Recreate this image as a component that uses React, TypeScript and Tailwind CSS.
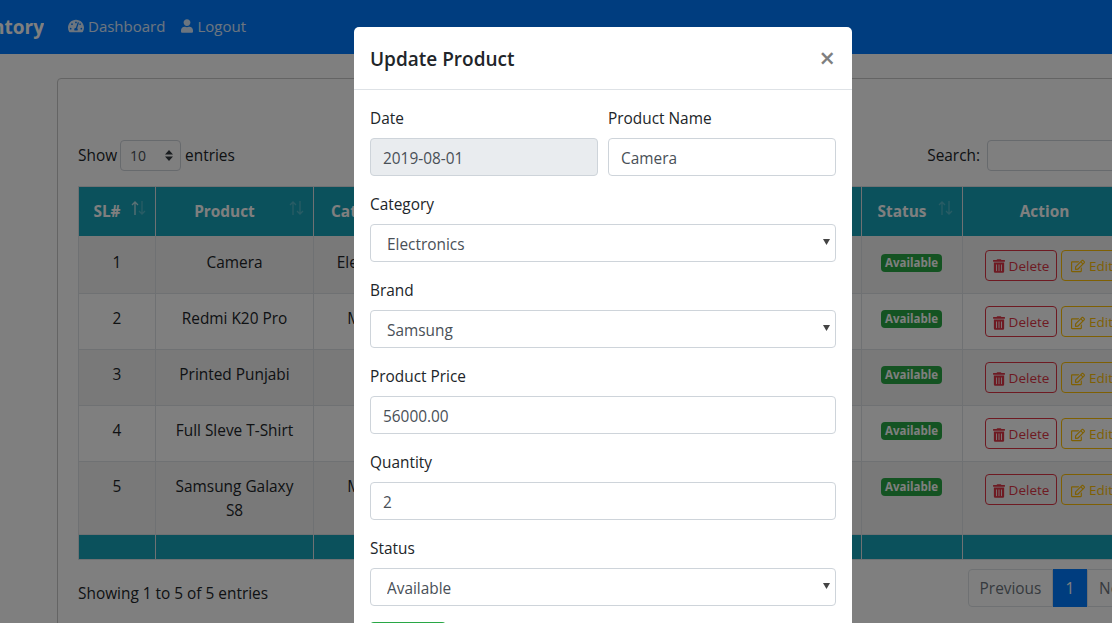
import React from "react";
import { FaTachometerAlt, FaUser, FaTrashAlt, FaRegEdit } from "react-icons/fa";

const font = "font-['Open_Sans','Noto_Sans',sans-serif]";

const rows = [
  { id: 1, name: ["Camera"], category: "Electronics", h: "h-[58px]", pt: "pt-[14px]", textPt: "pt-[15px]" },
  { id: 2, name: ["Redmi K20 Pro"], category: "Mobiles", h: "h-[56px]", pt: "pt-3", textPt: "pt-[13px]" },
  { id: 3, name: ["Printed Punjabi"], category: "Men", h: "h-[56px]", pt: "pt-3", textPt: "pt-[13px]" },
  { id: 4, name: ["Full Sleve T-Shirt"], category: "Men", h: "h-[56px]", pt: "pt-3", textPt: "pt-[13px]" },
  { id: 5, name: ["Samsung Galaxy", "S8"], category: "Mobiles", h: "h-[73px]", pt: "pt-3", textPt: "pt-[13px]" },
];

const SortHeader = ({ label, active }: { label: string; active?: boolean }) => (
  <th className="relative border-r border-[#dee2e6] pr-5 text-center font-bold text-white">
    {label}
    <svg className="absolute right-[9px] top-[14px] h-[14px] w-[15px]" viewBox="0 0 15 14" fill="none" stroke="white" strokeWidth="1.3">
      <path d="M4 14V1M1 4l3-3 3 3" opacity={active ? 0.7 : 0.25} />
      <path d="M11 0v13M8 10l3 3 3-3" opacity="0.25" />
    </svg>
  </th>
);

const Field = ({ label, value, disabled }: { label: string; value: string; disabled?: boolean }) => (
  <div className="mb-4 flex-1">
    <label className="mb-2 block h-6 leading-[26px] text-[#212529]">{label}</label>
    <input
      readOnly
      value={value}
      className={`block h-[38px] w-full rounded border border-[#ced4da] px-3 pt-[2px] text-[#495057] outline-none ${disabled ? "bg-[#e9ecef]" : "bg-white"}`}
    />
  </div>
);

const SelectField = ({ label, value }: { label: string; value: string }) => (
  <div className="mb-4">
    <label className="mb-2 block h-6 leading-[26px] text-[#212529]">{label}</label>
    <div className="relative">
      <select
        value={value}
        onChange={() => undefined}
        className="block h-[38px] w-full appearance-none rounded border border-[#ced4da] bg-white pl-4 pr-6 pt-[4px] text-[#495057] outline-none"
      >
        <option>{value}</option>
      </select>
      <svg className="pointer-events-none absolute right-[6px] top-[15px] h-[6px] w-[7px] text-[#444]" viewBox="0 0 7 6">
        <path d="M0 0h7L3.5 6z" fill="currentColor" />
      </svg>
    </div>
  </div>
);

export default function App() {
  return (
    <div className={`relative h-[623px] w-[1112px] overflow-hidden bg-white text-[15.4px] text-[#212529] ${font}`}>
      {/* Navbar */}
      <nav className="flex h-[54px] items-center bg-[#007bff]">
        <div className="flex w-[44px] justify-end overflow-hidden">
          <span className="whitespace-nowrap text-[19px] font-bold text-white">Inventory</span>
        </div>
        <div className="-mt-[2px] ml-6 flex items-center gap-4 text-[15px] text-white/85">
          <a className="flex items-center gap-[4px]">
            <FaTachometerAlt className="h-4 w-4" />
            Dashboard
          </a>
          <a className="flex items-center gap-[4px]">
            <FaUser className="h-[14px] w-[12px]" />
            Logout
          </a>
        </div>
      </nav>

      {/* Card */}
      <div className="ml-[57px] mt-6 h-[600px] w-[1090px] rounded border border-[#c8c8c8] bg-white px-5 pt-[61px]">
        <div className="flex h-[46px] items-start justify-between">
          <div className="flex items-center gap-[3px] whitespace-nowrap">
            Show
            <div className="relative">
              <select
                value="10"
                onChange={() => undefined}
                className="block h-[31px] w-[61px] appearance-none rounded border border-[#ced4da] bg-white pl-[9px] text-sm text-[#495057] outline-none"
              >
                <option>10</option>
              </select>
              <svg className="pointer-events-none absolute right-[8px] top-[10px] h-[11px] w-[8px] text-[#343a40]" viewBox="0 0 8 11">
                <path d="M4 0l4 4.4H0zM4 11L0 6.6h8z" fill="currentColor" />
              </svg>
            </div>
            <span className="ml-[1px]">entries</span>
          </div>
          <div className="flex items-center gap-[7px]">
            Search:
            <input readOnly className="h-[31px] w-[139px] rounded border border-[#ced4da] bg-white outline-none" />
          </div>
        </div>

        <table className="w-[1048px] table-fixed border-collapse border border-[#dee2e6]">
          <colgroup>
            <col className="w-[77px]" />
            <col className="w-[158px]" />
            <col className="w-[124px]" />
            <col className="w-[424px]" />
            <col className="w-[101px]" />
            <col className="w-[164px]" />
          </colgroup>
          <thead>
            <tr className="h-[49px] bg-[#17a2b8]">
              <SortHeader label="SL#" active />
              <SortHeader label="Product" />
              <SortHeader label="Category" />
              <th className="border-r border-[#dee2e6]" />
              <SortHeader label="Status" />
              <th className="text-center font-bold text-white">Action</th>
            </tr>
          </thead>
          <tbody>
            {rows.map((r) => (
              <tr key={r.id} className={`${r.h} border-b border-[#dee2e6] ${r.id % 2 === 1 ? "bg-[#f2f2f2]" : "bg-white"}`}>
                <td className={`border-r border-[#dee2e6] px-3 pb-0 text-center align-top leading-6 ${r.textPt}`}>{r.id}</td>
                <td className={`border-r border-[#dee2e6] px-3 pb-0 text-center align-top leading-6 ${r.textPt}`}>
                  {r.name.map((line) => (
                    <div key={line}>{line}</div>
                  ))}
                </td>
                <td className={`border-r border-[#dee2e6] px-3 pb-0 text-center align-top leading-6 ${r.textPt}`}>{r.category}</td>
                <td className="border-r border-[#dee2e6]" />
                <td className={`border-r border-[#dee2e6] pr-[1px] text-center align-top ${r.pt}`}>
                  <span className="mx-auto mt-1 block h-[18px] w-[61px] rounded bg-[#28a745] text-center text-[11.5px] font-bold leading-[18px] text-white">
                    Available
                  </span>
                </td>
                <td className={`whitespace-nowrap pl-[22px] align-top ${r.pt}`}>
                  <div className="flex gap-1">
                    <button className="flex h-[31px] w-[72px] shrink-0 items-center justify-center gap-[4px] rounded border border-[#dc3545] pt-[2px] text-[13.5px] text-[#dc3545]">
                      <FaTrashAlt className="h-[14px] w-[12px]" />
                      Delete
                    </button>
                    <button className="flex h-[31px] w-[60px] shrink-0 items-center justify-start gap-[4px] rounded border border-[#ffc107] pl-[9px] pt-[2px] text-[13.5px] text-[#ffc107]">
                      <FaRegEdit className="h-[14px] w-[14px]" />
                      Edit
                    </button>
                  </div>
                </td>
              </tr>
            ))}
          </tbody>
          <tfoot>
            <tr className="h-[25px] bg-[#17a2b8]">
              <td className="border-r border-[#dee2e6]" />
              <td className="border-r border-[#dee2e6]" />
              <td className="border-r border-[#dee2e6]" />
              <td className="border-r border-[#dee2e6]" />
              <td className="border-r border-[#dee2e6]" />
              <td />
            </tr>
          </tfoot>
        </table>

        <div className="mt-[9px] flex items-start justify-between">
          <div className="pt-[13px] leading-6">Showing 1 to 5 of 5 entries</div>
          <div className="mr-[-19px] flex h-[38px] text-[#6c757d]">
            <div className="flex w-[85px] items-center justify-center rounded-l border border-[#dee2e6] bg-white pt-[2px]">Previous</div>
            <div className="flex w-[34px] items-center justify-center bg-[#007bff] pt-[2px] text-white">1</div>
            <div className="flex w-[58px] items-center justify-center rounded-r border border-[#dee2e6] bg-white pt-[2px]">Next</div>
          </div>
        </div>
      </div>

      {/* Backdrop */}
      <div className="absolute inset-0 bg-black/50" />

      {/* Modal */}
      <div className="absolute left-[354px] top-[27px] h-[640px] w-[498px] rounded-[5px] bg-white">
        <div className="flex h-[63px] items-center justify-between border-b border-[#dee2e6] pl-4 pr-[17px]">
          <h5 className="pt-[2px] text-[19px] font-semibold text-[#212529]">Update Product</h5>
          <span className="-mt-[2px] text-[27px] font-semibold leading-none text-[#7f7f7f]">×</span>
        </div>
        <div className="p-4">
          <div className="flex gap-[10px]">
            <Field label="Date" value="2019-08-01" disabled />
            <Field label="Product Name" value="Camera" />
          </div>
          <SelectField label="Category" value="Electronics" />
          <SelectField label="Brand" value="Samsung" />
          <Field label="Product Price" value="56000.00" />
          <Field label="Quantity" value="2" />
          <SelectField label="Status" value="Available" />
          <button className="h-[38px] w-[76px] rounded bg-[#28a745] text-white">Update</button>
        </div>
      </div>
    </div>
  );
}
